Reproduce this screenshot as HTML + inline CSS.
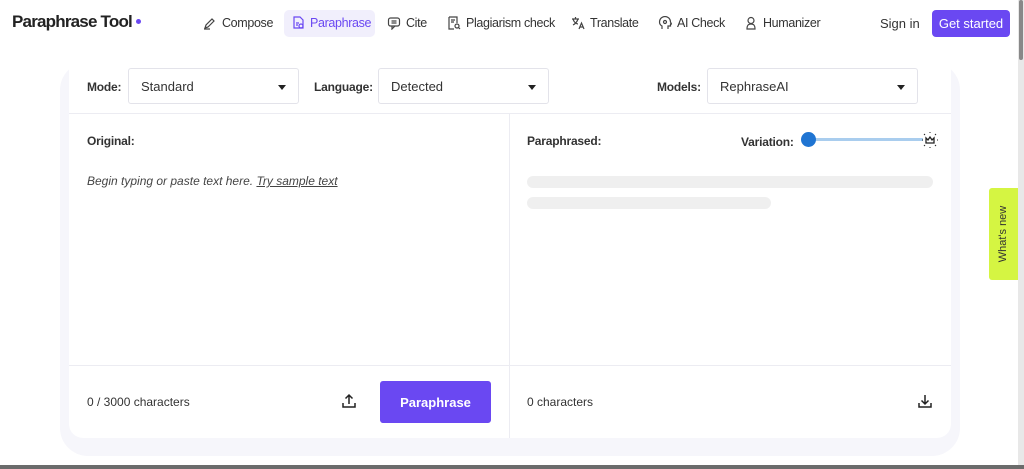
<!DOCTYPE html>
<html><head><meta charset="utf-8"><style>
*{box-sizing:border-box;margin:0;padding:0}
body{width:1024px;height:469px;overflow:hidden;background:#fff;font-family:"Liberation Sans",sans-serif;color:#222;position:relative}
.abs{position:absolute}
.nav{font-size:12.5px;letter-spacing:-0.35px;color:#333;display:flex;align-items:center;gap:5px;top:11px;height:23px}
.nav svg{width:14px;height:14px}
.sel{border:1px solid #e3e3ea;border-radius:3px;height:36px;background:#fff;font-size:13px;display:flex;align-items:center;padding-left:12px;color:#333}
.sel:after{content:"";position:absolute;right:12px;top:16px;border:4px solid transparent;border-top:5px solid #222}
.lbl{font-size:12px;font-weight:bold;color:#333;letter-spacing:-0.2px}
</style></head><body>
<div class="abs" style="left:12px;top:12px;font-size:17px;font-weight:bold;letter-spacing:-0.8px;color:#222">Paraphrase Tool<span style="display:inline-block;width:5px;height:5px;border-radius:50%;background:#6a48f2;margin-left:4px;vertical-align:3px"></span></div>

<div class="abs nav" style="left:203px"><svg viewBox="0 0 14 14" fill="none" stroke="#444" stroke-width="1.2"><path d="M2 12l1-3 6-6 2 2-6 6z M1 13h6"/></svg>Compose</div>
<div class="abs" style="left:284px;top:10px;width:91px;height:27px;background:#f1effc;border-radius:5px"></div>
<div class="abs nav" style="left:291px;color:#6a48f2"><svg viewBox="0 0 14 14" fill="none" stroke="#6a48f2" stroke-width="1.2"><path d="M3 1h6l3 3v8H3z M5 7h3 M5 9h2"/><circle cx="10" cy="10" r="2"/></svg>Paraphrase</div>
<div class="abs nav" style="left:387px"><svg viewBox="0 0 14 14" fill="none" stroke="#444" stroke-width="1.2"><rect x="1.5" y="2" width="11" height="8" rx="2"/><path d="M5 10l0 3 3-3 M4.5 5h5 M4.5 7h5"/></svg>Cite</div>
<div class="abs nav" style="left:447px"><svg viewBox="0 0 14 14" fill="none" stroke="#444" stroke-width="1.2"><path d="M2 1h8v6 M2 1v12h5 M4 4h4 M4 6h3"/><circle cx="10" cy="10" r="2"/><path d="M11.5 11.5l1.5 1.5"/></svg>Plagiarism check</div>
<div class="abs nav" style="left:571px"><svg viewBox="0 0 14 14" fill="none" stroke="#444" stroke-width="1.2"><path d="M1 3h7 M4.5 1v2 M2 3c1 3 3 5 5 5 M7 3c-1 3-3 5-5 6 M8 13l2.5-6 2.5 6 M9 11h3"/></svg>Translate</div>
<div class="abs nav" style="left:658px"><svg viewBox="0 0 14 14" fill="none" stroke="#444" stroke-width="1.2"><path d="M4 13v-3C2 9 1.5 7 1.5 6a5.5 5.5 0 0111 0l1 2h-1v2H10v3"/><circle cx="7" cy="6" r="1.5"/></svg>AI Check</div>
<div class="abs nav" style="left:744px"><svg viewBox="0 0 14 14" fill="none" stroke="#444" stroke-width="1.2"><circle cx="7" cy="4.5" r="3"/><path d="M3 13c0-4 1.5-5 4-5s4 1 4 5z"/></svg>Humanizer</div>
<div class="abs" style="left:880px;top:16px;font-size:13px;color:#333">Sign in</div>
<div class="abs" style="left:932px;top:10px;width:78px;height:27px;background:#6a48f2;border-radius:4px;color:#fff;font-size:13px;display:flex;align-items:center;justify-content:center">Get started</div>

<div class="abs" style="left:60px;top:62px;width:900px;height:394px;background:#f6f6fb;border-radius:28px"></div>
<div class="abs" style="left:69px;top:62px;width:882px;height:376px;background:#fff;border-radius:0 0 14px 14px"></div>
<div class="abs" style="left:69px;top:113px;width:882px;height:1px;background:#ececf2"></div>
<div class="abs" style="left:509px;top:114px;width:1px;height:324px;background:#ececf2"></div>
<div class="abs" style="left:69px;top:365px;width:882px;height:1px;background:#ececf2"></div>

<div class="abs lbl" style="left:87px;top:80px">Mode:</div>
<div class="abs sel" style="left:128px;top:68px;width:171px">Standard</div>
<div class="abs lbl" style="left:314px;top:80px">Language:</div>
<div class="abs sel" style="left:378px;top:68px;width:171px">Detected</div>
<div class="abs lbl" style="left:657px;top:80px">Models:</div>
<div class="abs sel" style="left:707px;top:68px;width:211px">RephraseAI</div>

<div class="abs lbl" style="left:87px;top:134px">Original:</div>
<div class="abs" style="left:87px;top:174px;font-size:12px;font-style:italic;color:#444">Begin typing or paste text here. <span style="text-decoration:underline">Try sample text</span></div>

<div class="abs lbl" style="left:527px;top:134px">Paraphrased:</div>
<div class="abs lbl" style="left:741px;top:135px">Variation:</div>
<div class="abs" style="left:808px;top:138px;width:115px;height:3px;background:#a9cdee"></div>
<div class="abs" style="left:801px;top:132px;width:15px;height:15px;border-radius:50%;background:#1f74d2"></div>
<svg class="abs" style="left:920px;top:130px" width="20" height="20" viewBox="0 0 20 20" fill="none" stroke="#222" stroke-width="1.3"><path d="M6 8l2 2 2-3 2 3 2-2v5H6z"/><path d="M10 2v1 M4 4l1 1 M16 4l-1 1 M2 10h1 M17 10h1 M4 16l1-1 M16 16l-1-1 M10 17v1" stroke-width="1"/></svg>
<div class="abs" style="left:527px;top:176px;width:406px;height:12px;background:#efefef;border-radius:6px"></div>
<div class="abs" style="left:527px;top:197px;width:244px;height:12px;background:#efefef;border-radius:6px"></div>

<div class="abs" style="left:87px;top:395px;font-size:12px;color:#333">0 / 3000 characters</div>
<svg class="abs" style="left:341px;top:393px" width="16" height="16" viewBox="0 0 16 16" fill="none" stroke="#222" stroke-width="1.5"><path d="M8 11V2 M4.5 5.5L8 2l3.5 3.5 M2 10v4h12v-4"/></svg>
<div class="abs" style="left:380px;top:381px;width:111px;height:42px;background:#6a48f2;border-radius:3px;color:#fff;font-size:13px;font-weight:bold;display:flex;align-items:center;justify-content:center">Paraphrase</div>
<div class="abs" style="left:527px;top:395px;font-size:12px;color:#333">0 characters</div>
<svg class="abs" style="left:917px;top:393px" width="16" height="16" viewBox="0 0 16 16" fill="none" stroke="#222" stroke-width="1.5"><path d="M8 2v9 M4.5 7.5L8 11l3.5-3.5 M2 10v4h12v-4"/></svg>

<div class="abs" style="left:989px;top:188px;width:30px;height:92px;background:#d5f542;border-radius:3px 0 0 3px"></div>
<div class="abs" style="left:959px;top:227px;width:90px;height:14px;font-size:11px;color:#333;transform:rotate(-90deg);text-align:center">What's new</div>

<div class="abs" style="left:1018px;top:0;width:6px;height:466px;background:#e8e8e8"></div>
<div class="abs" style="left:1019px;top:0;width:4px;height:60px;background:#888;border-radius:2px"></div>
<div class="abs" style="left:0;top:465px;width:1024px;height:4px;background:#6b6b6b"></div>
</body></html>
